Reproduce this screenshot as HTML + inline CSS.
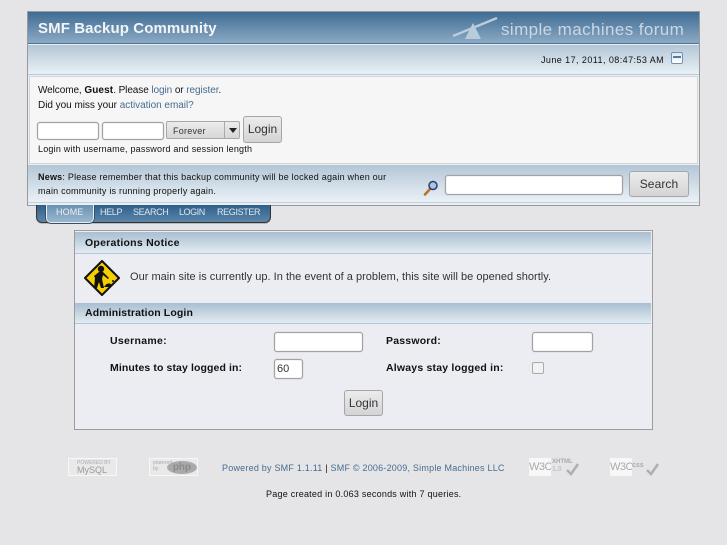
<!DOCTYPE html>
<html><head><meta charset="utf-8"><style>
html,body{margin:0;padding:0;width:727px;height:545px;overflow:hidden;background:#e5e5e8;font-family:"Liberation Sans",sans-serif;color:#111}
.a{position:absolute}
.t{position:absolute;white-space:nowrap;font-size:10px;line-height:12px}
.t a,.l{color:#476c8e;text-decoration:none}
.in{position:absolute;box-sizing:border-box;background:#fff;border:1px solid #a2a2a2;border-radius:3px;box-shadow:inset 0 0 1px #bbb,0 0 1px #aaa}
.btn{position:absolute;box-sizing:border-box;border:1px solid #a6a6a6;border-radius:3px;background:linear-gradient(#ececec,#d4d4d6);color:#333;font-size:12px;text-align:center;white-space:nowrap}
.bar{position:absolute;background:linear-gradient(#a9bfd1,#e2ebf2);border-bottom:1px solid #b6c6d6}
.b{font-weight:bold}
.badge{position:absolute;box-sizing:border-box;background:#e9e9ea;border:1px solid #f7f7f7;overflow:hidden;color:#aaa;white-space:nowrap}
</style></head><body>

<div class="a" style="left:27px;top:11px;width:671px;height:193px;border:1px solid #9a9a9a;background:#e8eff5"></div>
<div class="a" style="left:28px;top:12px;width:671px;height:31px;background:linear-gradient(#3f6c94,#8caac4);border-bottom:1px solid #4d7597"></div>
<div class="t" style="left:38px;top:20px;font-size:15px;line-height:18px;font-weight:bold;color:#f2f5f8;letter-spacing:.1px">SMF Backup Community</div>
<svg class="a" style="left:450px;top:16px" width="50" height="26"><path d="M3 20L47 2" stroke="#b8ccdc" stroke-width="2.4"/><path d="M15 23L23 7L31 23Z" fill="#b8ccdc"/></svg>
<div class="t" style="left:501px;top:20px;font-size:17px;line-height:20px;color:#c9d7e3;letter-spacing:.4px">simple machines forum</div>

<div class="a" style="left:28px;top:45px;width:671px;height:29px;background:linear-gradient(#b3c6d6,#eaf1f6);border-bottom:1px solid #b9c9d9"></div>
<div class="t" style="left:541px;top:54px;font-size:9px;letter-spacing:.43px">June 17, 2011, 08:47:53 AM</div>
<div class="a" style="left:671px;top:52px;width:12px;height:12px;box-sizing:border-box;border:1px solid #6d93b8;border-radius:2px;background:linear-gradient(#dfe8f0,#fff)"><div class="a" style="left:1px;top:3px;width:8px;height:2px;background:#4d7ba5"></div></div>

<div class="a" style="left:29px;top:76px;box-sizing:border-box;width:669px;height:88px;background:#f6f6f6;border:1px solid #d5d5d5"></div>
<div class="t" style="left:38px;top:85px;letter-spacing:-.08px">Welcome, <b style="letter-spacing:.1px">Guest</b>. Please <a>login</a> or <a>register</a>.</div>
<div class="t" style="left:38px;top:100px;letter-spacing:-.03px">Did you miss your <a>activation email?</a></div>
<div class="in" style="left:37px;top:122px;width:62px;height:18px"></div>
<div class="in" style="left:102px;top:122px;width:62px;height:18px"></div>
<div class="a" style="left:166px;top:121px;width:74px;height:18px;box-sizing:border-box;border:1px solid #a8a8a8;border-radius:2px;background:linear-gradient(#ececec,#d6d6d8)"></div>
<div class="a" style="left:224px;top:122px;width:1px;height:16px;background:#aaa"></div>
<div class="a" style="left:229px;top:128px;width:0;height:0;border:4px solid transparent;border-top:5px solid #222;border-bottom:0"></div>
<div class="t" style="left:173px;top:125px;font-size:9px;letter-spacing:.25px;color:#333">Forever</div>
<div class="btn" style="left:243px;top:116px;width:39px;height:27px;line-height:25px">Login</div>
<div class="t" style="left:38px;top:143px;font-size:9px;letter-spacing:.21px">Login with username, password and session length</div>

<div class="a" style="left:28px;top:165px;width:671px;height:37px;background:linear-gradient(#b3c6d6,#eaf1f6);border-bottom:1px solid #c4d0dc"></div>
<div class="t" style="left:38px;top:171px;font-size:9px;letter-spacing:.22px"><b>News</b>: Please remember that this backup community will be locked again when our</div>
<div class="t" style="left:38px;top:185px;font-size:9px;letter-spacing:.22px">main community is running properly again.</div>
<svg class="a" style="left:423px;top:180px" width="16" height="16"><path d="M2 14.5L7 9" stroke="#b8742a" stroke-width="2.6" stroke-linecap="round"/><circle cx="10" cy="5.5" r="4" fill="#a9c4e8" stroke="#2a3f66" stroke-width="1.5"/></svg>
<div class="in" style="left:445px;top:175px;width:178px;height:20px"></div>
<div class="btn" style="left:629px;top:171px;width:60px;height:26px;line-height:24px;letter-spacing:.1px">Search</div>

<div class="a" style="left:36px;top:205px;width:235px;height:18px;box-sizing:border-box;background:linear-gradient(#2f5f8a,#5c86ab);border:1px solid #333;border-top:0;border-radius:0 0 6px 6px;box-shadow:0 1px 0 #bbb"></div>
<div class="a" style="left:46px;top:205px;width:48px;height:18px;box-sizing:border-box;background:linear-gradient(#6a92b4,#9ab6cd);border:1px solid #e8eef3;border-top:0;border-radius:0 0 5px 5px;box-shadow:-1px 0 0 #34506b,1px 0 0 #34506b,0 1px 0 #34506b"></div>
<div class="t" style="left:56px;top:206px;font-size:9px;letter-spacing:.1px;color:#e8eff5">HOME</div>
<div class="t" style="left:100px;top:206px;font-size:9px;letter-spacing:-.35px;color:#dfe8f0">HELP</div>
<div class="t" style="left:133px;top:206px;font-size:9px;letter-spacing:-.35px;color:#dfe8f0">SEARCH</div>
<div class="t" style="left:179px;top:206px;font-size:9px;letter-spacing:-.45px;color:#dfe8f0">LOGIN</div>
<div class="t" style="left:217px;top:206px;font-size:9px;letter-spacing:-.35px;color:#dfe8f0">REGISTER</div>

<div class="a" style="left:74px;top:230px;width:577px;height:198px;border:1px solid #9c9c9c;background:#ecedf3"></div>
<div class="bar" style="left:75px;top:232px;width:576px;height:21px"></div>
<div class="t b" style="left:85px;top:237px;font-size:10.5px;letter-spacing:.25px">Operations Notice</div>
<svg class="a" style="left:84px;top:260px" width="36" height="36"><path d="M18 1L35 18L18 35L1 18Z" fill="#f5d000" stroke="#111" stroke-width="2" stroke-linejoin="round"/><circle cx="17" cy="9" r="3.2" fill="#111"/><path d="M15 12L10 16L11 18L10 28L13 28L15 22L17 28L20 28L18 19L19 15L24 19L25 18L19 12Z" fill="#111"/><path d="M20 27Q24 21 28 25L27 27Z" fill="#111"/><circle cx="29" cy="21" r="1" fill="#111"/></svg>
<div class="t" style="left:130px;top:271px;font-size:11px;line-height:13px;letter-spacing:.02px;color:#333">Our main site is currently up. In the event of a problem, this site will be opened shortly.</div>
<div class="bar" style="left:75px;top:303px;width:576px;height:20px"></div>
<div class="t b" style="left:85px;top:307px;font-size:10.5px;letter-spacing:.12px">Administration Login</div>
<div class="t b" style="left:110px;top:335px;font-size:10.5px;letter-spacing:.3px">Username:</div>
<div class="in" style="left:274px;top:332px;width:89px;height:20px"></div>
<div class="t b" style="left:386px;top:335px;font-size:10.5px;letter-spacing:.2px">Password:</div>
<div class="in" style="left:532px;top:332px;width:61px;height:20px"></div>
<div class="t b" style="left:110px;top:362px;font-size:10.5px;letter-spacing:.1px">Minutes to stay logged in:</div>
<div class="in" style="left:274px;top:359px;width:29px;height:20px;font-size:11px;line-height:18px;padding-left:2px;color:#333">60</div>
<div class="t b" style="left:386px;top:362px;font-size:10.5px;letter-spacing:.2px">Always stay logged in:</div>
<div class="a" style="left:532px;top:362px;width:12px;height:12px;box-sizing:border-box;border:1px solid #aaa;border-radius:2px;background:#f2f2f2"></div>
<div class="btn" style="left:344px;top:390px;width:39px;height:26px;line-height:24px">Login</div>

<div class="badge" style="left:68px;top:458px;width:49px;height:18px">
<div class="t" style="left:8px;top:1px;font-size:5px;line-height:7px;color:#aaa">POWERED BY</div>
<div class="t" style="left:8px;top:6px;font-size:9px;line-height:11px;color:#999">MySQL</div>
</div>
<div class="badge" style="left:149px;top:458px;width:49px;height:18px">
<div class="t" style="left:3px;top:1px;font-size:5px;line-height:6px;color:#aaa">powered<br>by</div>
<div class="t" style="left:17px;top:2px;width:30px;height:13px;border-radius:50%;background:#aaa;color:#8a8a8a;font-size:10px;line-height:13px;text-align:center;font-weight:bold">php</div>
</div>
<div class="t l" style="left:222px;top:462px;font-size:9px;letter-spacing:.22px">Powered by SMF 1.1.11 <span style="color:#111">|</span> SMF © 2006-2009, Simple Machines LLC</div>

<div class="a" style="left:529px;top:458px;width:22px;height:18px;background:#f7f7f7;color:#aaa;font-size:11px;line-height:18px;letter-spacing:-.5px;white-space:nowrap;overflow:hidden">W3C</div>
<div class="t" style="left:552px;top:459px;font-size:6px;line-height:7px;color:#aaa;font-weight:bold">XHTML<br><span style="font-size:7px;color:#c4c4c4">1.0</span></div>
<svg class="a" style="left:565px;top:462px" width="14" height="14"><path d="M2 8L6 12L13 2" stroke="#b0b0b0" stroke-width="2.6" fill="none"/></svg>
<div class="a" style="left:610px;top:458px;width:22px;height:18px;background:#f7f7f7;color:#aaa;font-size:11px;line-height:18px;letter-spacing:-.5px;white-space:nowrap;overflow:hidden">W3C</div>
<div class="t" style="left:632px;top:461px;font-size:7px;line-height:9px;color:#aaa;font-weight:bold">css</div>
<svg class="a" style="left:645px;top:462px" width="14" height="14"><path d="M2 8L6 12L13 2" stroke="#b0b0b0" stroke-width="2.6" fill="none"/></svg>

<div class="t" style="left:266px;top:488px;font-size:9px;letter-spacing:.24px">Page created in 0.063 seconds with 7 queries.</div>
</body></html>
